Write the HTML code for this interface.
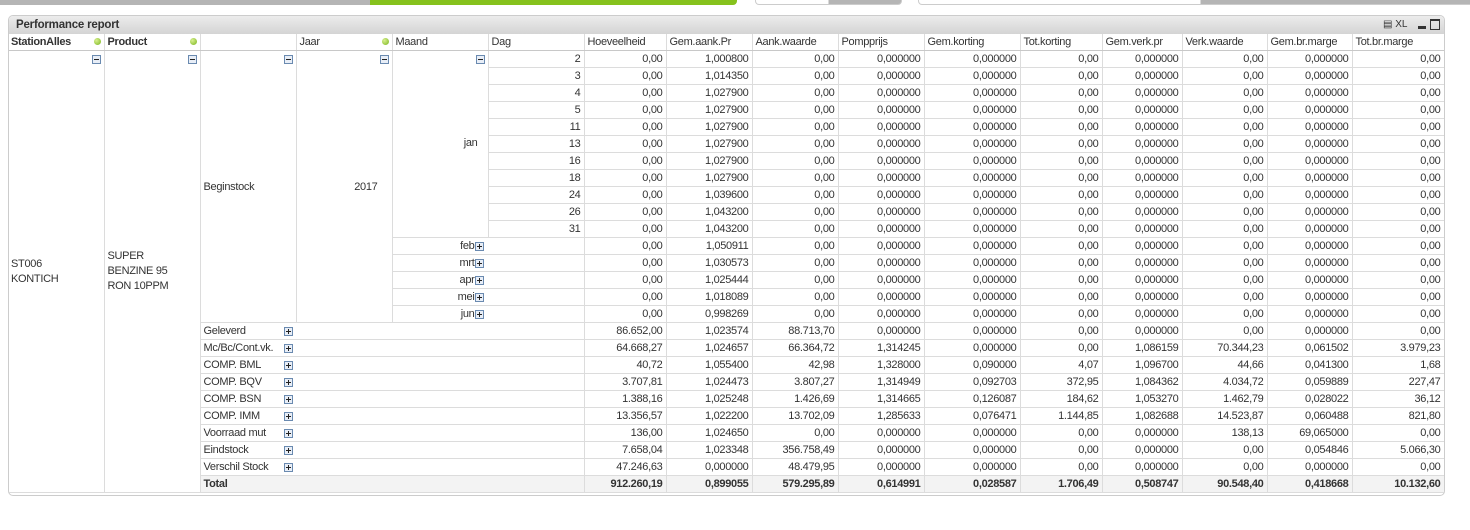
<!DOCTYPE html>
<html><head><meta charset="utf-8"><style>
body{margin:0;width:1470px;height:530px;background:#fff;position:relative;overflow:hidden;font-family:"Liberation Sans",sans-serif;font-size:11px;color:#333;}
.top{position:absolute;top:0;height:5px}
.panel{position:absolute;left:8px;top:15px;width:1435px;height:479px;border:1px solid #ccc;border-radius:5px;overflow:hidden;background:#fff}
.title{height:18px;background:linear-gradient(#ececec,#d4d4d4);font-weight:bold;font-size:11.5px;line-height:18px;padding-left:7px;color:#333;letter-spacing:-0.2px}
table{position:absolute;left:-1px;top:18px;border-collapse:collapse;table-layout:fixed;width:1436px}
td{height:16px;padding:0 3px;border:1px solid #dcdcdc;white-space:nowrap;overflow:hidden;line-height:16px;letter-spacing:-0.3px}
tr.h td{border-top:none;border-bottom:1px solid #c8c8c8;background:#fff}
td.n{text-align:right}
.mi,.pl{display:inline-block;width:7px;height:7px;border:1px solid #6a8ab0;background:#e8eef7;position:relative;vertical-align:middle}
.mi:after,.pl:after{content:"";position:absolute;left:1px;top:3px;width:5px;height:1px;background:#222}
.pl:before{content:"";position:absolute;left:3px;top:1px;width:1px;height:5px;background:#222}
.dot{display:inline-block;width:7px;height:7px;border-radius:50%;background:radial-gradient(circle at 35% 35%,#d8f090,#7ab51d);float:right;margin-top:4px}
.tot td{background:#f3f3f3;font-weight:bold}
.ico{position:absolute;top:3px;font-size:10px;color:#333}
</style></head><body>
<div class="top" style="left:0;width:370px;background:#b5b5b5"></div>
<div class="top" style="left:370px;width:367px;background:#86c21d;border-radius:0 0 4px 0"></div>
<div class="top" style="left:755px;width:145px;border:1px solid #ccc;border-top:none;height:4px;border-radius:0 0 4px 4px;background:linear-gradient(90deg,#fff 50%,#b5b5b5 50%)"></div>
<div class="top" style="left:918px;width:552px;border:1px solid #ccc;border-top:none;height:4px;border-radius:0 0 0 4px;background:linear-gradient(90deg,#fff 51%,#b5b5b5 51%)"></div>
<div class="panel">
<div class="title">Performance report</div>
<div class="ico" style="left:1374px">&#9636; XL</div>
<div style="position:absolute;left:1409px;top:10px;width:8px;height:3px;background:#333"></div>
<div style="position:absolute;left:1421px;top:3px;width:8px;height:8px;border:1px solid #333;border-top-width:2px"></div>
<table>
<colgroup><col style="width:96px"><col style="width:96px"><col style="width:96px"><col style="width:96px"><col style="width:96px"><col style="width:96px"><col style="width:82px"><col style="width:86px"><col style="width:86px"><col style="width:86px"><col style="width:96px"><col style="width:82px"><col style="width:80px"><col style="width:85px"><col style="width:85px"><col style="width:92px"></colgroup>
<tr class="h"><td style="font-weight:bold;border-left:none">StationAlles<span class="dot"></span></td><td style="font-weight:bold">Product<span class="dot"></span></td><td></td><td>Jaar<span class="dot"></span></td><td>Maand</td><td>Dag</td><td>Hoeveelheid</td><td>Gem.aank.Pr</td><td>Aank.waarde</td><td>Pompprijs</td><td>Gem.korting</td><td>Tot.korting</td><td>Gem.verk.pr</td><td>Verk.waarde</td><td>Gem.br.marge</td><td>Tot.br.marge</td></tr>
<tr><td rowspan="27" style="vertical-align:top;border-left:none;position:relative"><div style="text-align:right"><span class="mi"></span></div><div style="position:absolute;left:3px;top:206px;line-height:15px">ST006<br>KONTICH</div></td>
<td rowspan="27" style="vertical-align:top;position:relative"><div style="text-align:right"><span class="mi"></span></div><div style="position:absolute;left:3px;top:198px;line-height:15px">SUPER<br>BENZINE 95<br>RON 10PPM</div></td>
<td rowspan="16" style="vertical-align:top;position:relative"><div style="text-align:right"><span class="mi"></span></div><div style="position:absolute;left:3px;top:128px">Beginstock</div></td>
<td rowspan="16" style="vertical-align:top;position:relative"><div style="text-align:right"><span class="mi"></span></div><div style="position:absolute;right:14px;top:128px">2017</div></td>
<td rowspan="11" style="vertical-align:top;position:relative"><div style="text-align:right"><span class="mi"></span></div><div style="position:absolute;right:10px;top:84px">jan</div></td>
<td class="n">2</td><td class="n">0,00</td><td class="n">1,000800</td><td class="n">0,00</td><td class="n">0,000000</td><td class="n">0,000000</td><td class="n">0,00</td><td class="n">0,000000</td><td class="n">0,00</td><td class="n">0,000000</td><td class="n">0,00</td></tr>
<tr><td class="n">3</td><td class="n">0,00</td><td class="n">1,014350</td><td class="n">0,00</td><td class="n">0,000000</td><td class="n">0,000000</td><td class="n">0,00</td><td class="n">0,000000</td><td class="n">0,00</td><td class="n">0,000000</td><td class="n">0,00</td></tr>
<tr><td class="n">4</td><td class="n">0,00</td><td class="n">1,027900</td><td class="n">0,00</td><td class="n">0,000000</td><td class="n">0,000000</td><td class="n">0,00</td><td class="n">0,000000</td><td class="n">0,00</td><td class="n">0,000000</td><td class="n">0,00</td></tr>
<tr><td class="n">5</td><td class="n">0,00</td><td class="n">1,027900</td><td class="n">0,00</td><td class="n">0,000000</td><td class="n">0,000000</td><td class="n">0,00</td><td class="n">0,000000</td><td class="n">0,00</td><td class="n">0,000000</td><td class="n">0,00</td></tr>
<tr><td class="n">11</td><td class="n">0,00</td><td class="n">1,027900</td><td class="n">0,00</td><td class="n">0,000000</td><td class="n">0,000000</td><td class="n">0,00</td><td class="n">0,000000</td><td class="n">0,00</td><td class="n">0,000000</td><td class="n">0,00</td></tr>
<tr><td class="n">13</td><td class="n">0,00</td><td class="n">1,027900</td><td class="n">0,00</td><td class="n">0,000000</td><td class="n">0,000000</td><td class="n">0,00</td><td class="n">0,000000</td><td class="n">0,00</td><td class="n">0,000000</td><td class="n">0,00</td></tr>
<tr><td class="n">16</td><td class="n">0,00</td><td class="n">1,027900</td><td class="n">0,00</td><td class="n">0,000000</td><td class="n">0,000000</td><td class="n">0,00</td><td class="n">0,000000</td><td class="n">0,00</td><td class="n">0,000000</td><td class="n">0,00</td></tr>
<tr><td class="n">18</td><td class="n">0,00</td><td class="n">1,027900</td><td class="n">0,00</td><td class="n">0,000000</td><td class="n">0,000000</td><td class="n">0,00</td><td class="n">0,000000</td><td class="n">0,00</td><td class="n">0,000000</td><td class="n">0,00</td></tr>
<tr><td class="n">24</td><td class="n">0,00</td><td class="n">1,039600</td><td class="n">0,00</td><td class="n">0,000000</td><td class="n">0,000000</td><td class="n">0,00</td><td class="n">0,000000</td><td class="n">0,00</td><td class="n">0,000000</td><td class="n">0,00</td></tr>
<tr><td class="n">26</td><td class="n">0,00</td><td class="n">1,043200</td><td class="n">0,00</td><td class="n">0,000000</td><td class="n">0,000000</td><td class="n">0,00</td><td class="n">0,000000</td><td class="n">0,00</td><td class="n">0,000000</td><td class="n">0,00</td></tr>
<tr><td class="n">31</td><td class="n">0,00</td><td class="n">1,043200</td><td class="n">0,00</td><td class="n">0,000000</td><td class="n">0,000000</td><td class="n">0,00</td><td class="n">0,000000</td><td class="n">0,00</td><td class="n">0,000000</td><td class="n">0,00</td></tr>
<tr><td colspan="2" class="n" style="padding-right:100px">feb<span class="pl"></span></td><td class="n">0,00</td><td class="n">1,050911</td><td class="n">0,00</td><td class="n">0,000000</td><td class="n">0,000000</td><td class="n">0,00</td><td class="n">0,000000</td><td class="n">0,00</td><td class="n">0,000000</td><td class="n">0,00</td></tr>
<tr><td colspan="2" class="n" style="padding-right:100px">mrt<span class="pl"></span></td><td class="n">0,00</td><td class="n">1,030573</td><td class="n">0,00</td><td class="n">0,000000</td><td class="n">0,000000</td><td class="n">0,00</td><td class="n">0,000000</td><td class="n">0,00</td><td class="n">0,000000</td><td class="n">0,00</td></tr>
<tr><td colspan="2" class="n" style="padding-right:100px">apr<span class="pl"></span></td><td class="n">0,00</td><td class="n">1,025444</td><td class="n">0,00</td><td class="n">0,000000</td><td class="n">0,000000</td><td class="n">0,00</td><td class="n">0,000000</td><td class="n">0,00</td><td class="n">0,000000</td><td class="n">0,00</td></tr>
<tr><td colspan="2" class="n" style="padding-right:100px">mei<span class="pl"></span></td><td class="n">0,00</td><td class="n">1,018089</td><td class="n">0,00</td><td class="n">0,000000</td><td class="n">0,000000</td><td class="n">0,00</td><td class="n">0,000000</td><td class="n">0,00</td><td class="n">0,000000</td><td class="n">0,00</td></tr>
<tr><td colspan="2" class="n" style="padding-right:100px">jun<span class="pl"></span></td><td class="n">0,00</td><td class="n">0,998269</td><td class="n">0,00</td><td class="n">0,000000</td><td class="n">0,000000</td><td class="n">0,00</td><td class="n">0,000000</td><td class="n">0,00</td><td class="n">0,000000</td><td class="n">0,00</td></tr>
<tr><td colspan="4" style="position:relative">Geleverd<span class="pl" style="position:absolute;left:83px;top:4px"></span></td><td class="n">86.652,00</td><td class="n">1,023574</td><td class="n">88.713,70</td><td class="n">0,000000</td><td class="n">0,000000</td><td class="n">0,00</td><td class="n">0,000000</td><td class="n">0,00</td><td class="n">0,000000</td><td class="n">0,00</td></tr>
<tr><td colspan="4" style="position:relative">Mc/Bc/Cont.vk.<span class="pl" style="position:absolute;left:83px;top:4px"></span></td><td class="n">64.668,27</td><td class="n">1,024657</td><td class="n">66.364,72</td><td class="n">1,314245</td><td class="n">0,000000</td><td class="n">0,00</td><td class="n">1,086159</td><td class="n">70.344,23</td><td class="n">0,061502</td><td class="n">3.979,23</td></tr>
<tr><td colspan="4" style="position:relative">COMP. BML<span class="pl" style="position:absolute;left:83px;top:4px"></span></td><td class="n">40,72</td><td class="n">1,055400</td><td class="n">42,98</td><td class="n">1,328000</td><td class="n">0,090000</td><td class="n">4,07</td><td class="n">1,096700</td><td class="n">44,66</td><td class="n">0,041300</td><td class="n">1,68</td></tr>
<tr><td colspan="4" style="position:relative">COMP. BQV<span class="pl" style="position:absolute;left:83px;top:4px"></span></td><td class="n">3.707,81</td><td class="n">1,024473</td><td class="n">3.807,27</td><td class="n">1,314949</td><td class="n">0,092703</td><td class="n">372,95</td><td class="n">1,084362</td><td class="n">4.034,72</td><td class="n">0,059889</td><td class="n">227,47</td></tr>
<tr><td colspan="4" style="position:relative">COMP. BSN<span class="pl" style="position:absolute;left:83px;top:4px"></span></td><td class="n">1.388,16</td><td class="n">1,025248</td><td class="n">1.426,69</td><td class="n">1,314665</td><td class="n">0,126087</td><td class="n">184,62</td><td class="n">1,053270</td><td class="n">1.462,79</td><td class="n">0,028022</td><td class="n">36,12</td></tr>
<tr><td colspan="4" style="position:relative">COMP. IMM<span class="pl" style="position:absolute;left:83px;top:4px"></span></td><td class="n">13.356,57</td><td class="n">1,022200</td><td class="n">13.702,09</td><td class="n">1,285633</td><td class="n">0,076471</td><td class="n">1.144,85</td><td class="n">1,082688</td><td class="n">14.523,87</td><td class="n">0,060488</td><td class="n">821,80</td></tr>
<tr><td colspan="4" style="position:relative">Voorraad mut<span class="pl" style="position:absolute;left:83px;top:4px"></span></td><td class="n">136,00</td><td class="n">1,024650</td><td class="n">0,00</td><td class="n">0,000000</td><td class="n">0,000000</td><td class="n">0,00</td><td class="n">0,000000</td><td class="n">138,13</td><td class="n">69,065000</td><td class="n">0,00</td></tr>
<tr><td colspan="4" style="position:relative">Eindstock<span class="pl" style="position:absolute;left:83px;top:4px"></span></td><td class="n">7.658,04</td><td class="n">1,023348</td><td class="n">356.758,49</td><td class="n">0,000000</td><td class="n">0,000000</td><td class="n">0,00</td><td class="n">0,000000</td><td class="n">0,00</td><td class="n">0,054846</td><td class="n">5.066,30</td></tr>
<tr><td colspan="4" style="position:relative">Verschil Stock<span class="pl" style="position:absolute;left:83px;top:4px"></span></td><td class="n">47.246,63</td><td class="n">0,000000</td><td class="n">48.479,95</td><td class="n">0,000000</td><td class="n">0,000000</td><td class="n">0,00</td><td class="n">0,000000</td><td class="n">0,00</td><td class="n">0,000000</td><td class="n">0,00</td></tr>
<tr class="tot"><td colspan="4">Total</td><td class="n">912.260,19</td><td class="n">0,899055</td><td class="n">579.295,89</td><td class="n">0,614991</td><td class="n">0,028587</td><td class="n">1.706,49</td><td class="n">0,508747</td><td class="n">90.548,40</td><td class="n">0,418668</td><td class="n">10.132,60</td></tr>
</table>
</div>
</body></html>
